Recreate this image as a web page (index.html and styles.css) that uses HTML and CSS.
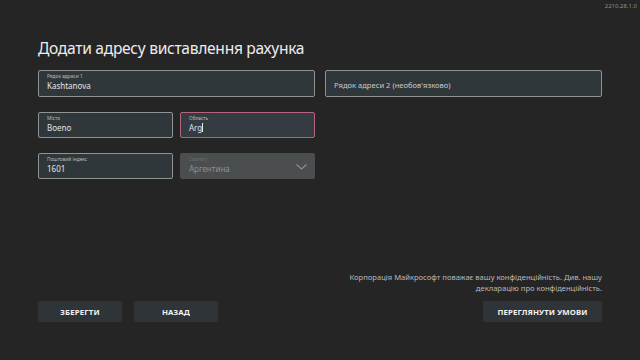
FILE: index.html
```html
<!DOCTYPE html>
<html lang="uk">
<head>
    <meta charset="UTF-8">
    <meta name="viewport" content="width=device-width, initial-scale=1.0">
    <title>Додати адресу виставлення рахунка</title>
    <link rel="stylesheet" href="styles.css">
</head>
<body>
    <div class="version">2210.28.1.0</div>

    <div class="page">
        <h1 class="page-title">Додати адресу виставлення рахунка</h1>

        <div class="form-row">
            <div class="field">
                <div class="field-label">Рядок адреси 1</div>
                <div class="field-value">Kashtanova</div>
            </div>
            <div class="field field-empty">
                <div class="field-placeholder">Рядок адреси 2 (необов'язково)</div>
            </div>
        </div>

        <div class="form-row">
            <div class="half-group">
                <div class="field">
                    <div class="field-label">Місто</div>
                    <div class="field-value">Boeno</div>
                </div>
                <div class="field field-focused">
                    <div class="field-label">Область</div>
                    <div class="field-value">Arg<span class="caret"></span></div>
                </div>
            </div>
            <div class="spacer"></div>
        </div>

        <div class="form-row">
            <div class="half-group">
                <div class="field">
                    <div class="field-label">Поштовий індекс</div>
                    <div class="field-value">1601</div>
                </div>
                <div class="field field-disabled">
                    <div class="field-label">Country</div>
                    <div class="field-value">Аргентина</div>
                    <svg class="chevron" width="11" height="6" viewBox="0 0 11 6">
                        <polyline points="0.5,0.5 5.5,5 10.5,0.5" fill="none" stroke="#8c9192" stroke-width="1.1"/>
                    </svg>
                </div>
            </div>
            <div class="spacer"></div>
        </div>

        <div class="footer">
            <p class="privacy">Корпорація Майкрософт поважає вашу конфіденційність. Див. нашу<br>декларацію про конфіденційність.</p>
            <div class="button-row">
                <button class="action-btn btn-save">ЗБЕРЕГТИ</button>
                <button class="action-btn btn-back">НАЗАД</button>
                <button class="action-btn btn-terms">ПЕРЕГЛЯНУТИ УМОВИ</button>
            </div>
        </div>
    </div>
</body>
</html>
```

FILE: styles.css
```css
* { margin: 0; padding: 0; box-sizing: border-box; }

html, body {
    width: 640px;
    height: 360px;
    overflow: hidden;
}

body {
    font-family: 'Noto Sans', 'Open Sans', sans-serif;
    background: #252525;
    color: #e6e6e6;
    position: relative;
}

.version {
    position: absolute;
    top: 2px;
    right: 3px;
    font-size: 6px;
    color: #8d8d8d;
}

.page {
    height: 360px;
    padding: 36px 38px 38px 38px;
    display: flex;
    flex-direction: column;
}

.page-title {
    font-size: 15.6px;
    font-weight: 400;
    color: #ececec;
    line-height: 24px;
    margin-bottom: 10px;
    letter-spacing: -0.3px;
}

.form-row {
    display: flex;
    gap: 10px;
    margin-bottom: 15px;
}

.form-row > .field,
.half-group,
.spacer {
    flex: 1;
}

.half-group {
    display: flex;
    gap: 7px;
}

.half-group .field {
    flex: 1;
    height: 26px;
}

.field {
    position: relative;
    height: 27px;
    background: #30373a;
    border: 1px solid #8e9394;
    border-radius: 2px;
    padding: 2px 8px 0 8px;
}

.field-label {
    font-size: 4.8px;
    line-height: 7px;
    color: #b9bcbd;
}

.field-value {
    font-size: 8px;
    line-height: 12px;
    color: #e4e4e4;
}

.field-empty {
    display: flex;
    align-items: center;
}

.field-placeholder {
    font-size: 7.6px;
    color: #c8cacb;
}

.field-focused {
    border-color: #b4647f;
    background: #343b41;
}

.caret {
    display: inline-block;
    width: 1px;
    height: 9px;
    background: #e8e8e8;
    vertical-align: -1px;
}

.field-disabled {
    background: #4a4e4f;
    border-color: #4a4e4f;
}

.field-disabled .field-label {
    color: #6f7475;
}

.field-disabled .field-value {
    color: #8c9192;
}

.chevron {
    position: absolute;
    right: 7px;
    top: 10px;
}

.footer {
    margin-top: auto;
}

.privacy {
    text-align: right;
    font-size: 7.6px;
    line-height: 11px;
    color: #b9b9b9;
    margin-bottom: 7px;
}

.button-row {
    display: flex;
    gap: 12px;
}

.action-btn {
    height: 21px;
    width: 84px;
    background: #2e3437;
    color: #f2f2f2;
    border: none;
    border-radius: 2px;
    font-family: 'Noto Sans', 'Open Sans', sans-serif;
    font-size: 7.8px;
    font-weight: 700;
    letter-spacing: 0.1px;
}

.btn-terms {
    margin-left: auto;
    width: 119px;
}
```
